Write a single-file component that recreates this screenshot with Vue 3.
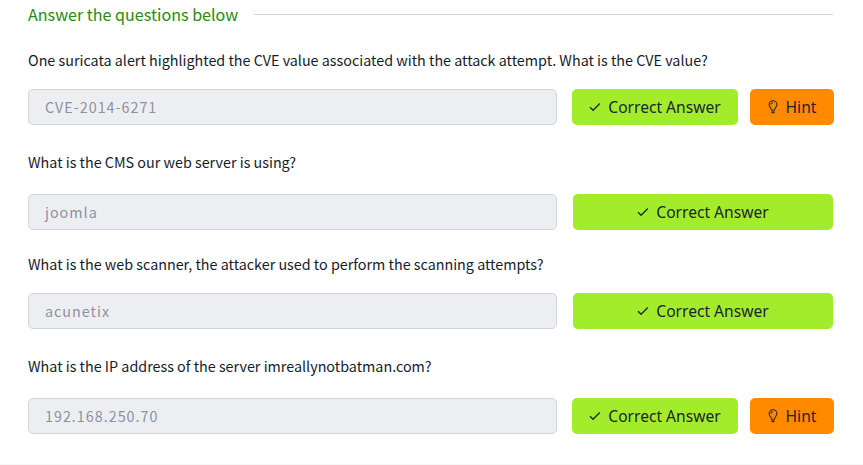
<script setup>
const items = [
  { question: 'One suricata alert highlighted the CVE value associated with the attack attempt. What is the CVE value?', answer: 'CVE-2014-6271', hint: true },
  { question: 'What is the CMS our web server is using?', answer: 'joomla', hint: false, low: true },
  { question: 'What is the web scanner, the attacker used to perform the scanning attempts?', answer: 'acunetix', hint: false },
  { question: 'What is the IP address of the server imreallynotbatman.com?', answer: '192.168.250.70', hint: true, low: true },
]
</script>

<template>
  <main class="card">
    <header class="heading">
      <h2>Answer the questions below</h2>
      <span class="rule"></span>
    </header>
    <section v-for="item in items" :key="item.answer" class="item" :class="{ low: item.low }">
      <p class="question">{{ item.question }}</p>
      <div class="row">
        <div class="answer">{{ item.answer }}</div>
        <div class="actions" :class="{ pair: item.hint }">
          <button class="btn correct">
            <svg class="check" width="12" height="10" viewBox="0 0 12 10"><path d="M1 5.2 4.1 8.300 10.800 1.500" /></svg>
            <span>Correct Answer</span>
          </button>
          <button v-if="item.hint" class="btn hint">
            <svg class="bulb" width="10" height="14" viewBox="0 0 10 14">
              <path d="M3.3 9.600C3.200 7.800 1.100 7 1.100 4.600a3.900 3.900 0 0 1 7.800 0c0 2.400-2.100 3.200-2.200 5M3 4.600c0-1.200.8-1.900 1.900-1.900M3 10.200h4" />
              <path class="base" d="M3.500 12.300h3" />
            </svg>
            <span>Hint</span>
          </button>
        </div>
      </div>
    </section>
  </main>
</template>

<style>
body {
  background: #fff;
}
</style>

<style scoped>
.card {
  box-sizing: border-box;
  height: 465px;
  padding: 2px 30px 0 28px;
  border-bottom: 1px solid #f6f6f7;
  overflow: hidden;
  background: #fff;
  font-family: "Noto Sans CJK SC", sans-serif;
  color: #151c2b;
}
.heading {
  display: flex;
  align-items: center;
  height: 24px;
  margin-bottom: 22px;
}
h2 {
  width: 210px;
  margin: 0 16px 0 0;
  font-size: 16.1px;
  font-weight: 400;
  line-height: 24px;
  white-space: nowrap;
  color: #2c8a0e;
}
.rule {
  flex: 1;
  height: 1px;
  background: #d1d5db;
}
.item {
  height: 102px;
}
.question {
  margin: 0 0 17px;
  font-size: 14.33px;
  line-height: 24px;
  white-space: nowrap;
}
.low .question {
  margin-bottom: 20px;
}
.row {
  display: flex;
  gap: 16px;
  height: 36px;
}
.answer {
  box-sizing: border-box;
  width: 529px;
  padding-left: 16px;
  border: 1px solid #d1d5de;
  border-radius: 5px;
  background: #edeef2;
  color: #8c919e;
  font-size: 14.33px;
  line-height: 33px;
  letter-spacing: 1px;
}
.actions {
  display: flex;
  flex: 1;
  gap: 12px;
}
.pair {
  margin: 0 -1px;
}
.btn {
  display: flex;
  align-items: center;
  justify-content: center;
  gap: 7px;
  height: 36px;
  padding: 0;
  border: 0;
  border-radius: 5px;
  font-family: "Noto Sans", sans-serif;
  font-size: 15.6px;
  line-height: 36px;
  white-space: nowrap;
  color: #1c2530;
}
.correct {
  flex: 1;
  background: #a3ec2c;
}
.hint {
  width: 84px;
  gap: 8px;
  background: #ff8a00;
}
.check,
.bulb {
  fill: none;
  stroke: #202b32;
  stroke-width: 1.4;
}
.bulb {
  stroke-width: 1.1;
}
.base {
  stroke-width: 1.8;
}
</style>
